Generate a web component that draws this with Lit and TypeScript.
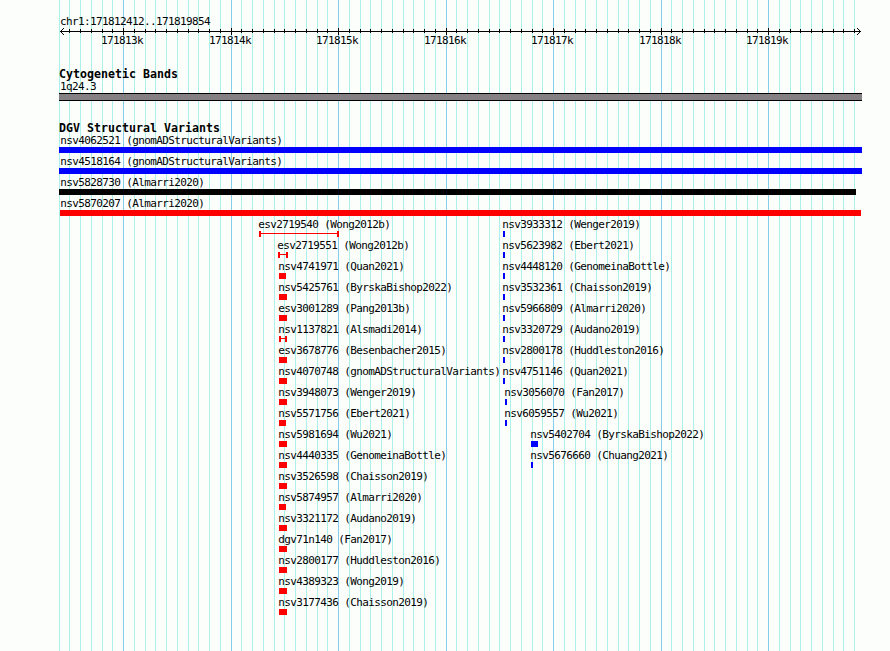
import { LitElement, css, html, svg } from 'lit';
import { customElement, property } from 'lit/decorators.js';
import { classMap } from 'lit/directives/class-map.js';
import { styleMap } from 'lit/directives/style-map.js';

interface Feature {
  name: string;
  // Offset of the label and of the glyph from the left edge of the lane
  indent: number;
  inset?: number;
  width: number;
  color: 'gain' | 'loss' | 'complex';
  span?: boolean;
}

const REGION_START = 171812412;
const REGION_END = 171819854;
const PANEL_LEFT = 60;
const PANEL_WIDTH = 800;

const toX = (bp: number) =>
  Math.round(PANEL_LEFT + ((bp - REGION_START) * PANEL_WIDTH) / (REGION_END - REGION_START + 1));

const TICKS: { bp: number; x: number; major: boolean }[] = [];
for (let bp = 171812400; bp <= REGION_END; bp += 100) {
  TICKS.push({ bp, x: toX(bp), major: bp % 1000 === 0 });
}

const WIDE: Feature[] = [
  { name: 'nsv4062521 (gnomADStructuralVariants)', indent: 1, inset: 0, width: 803, color: 'gain' },
  { name: 'nsv4518164 (gnomADStructuralVariants)', indent: 1, inset: 0, width: 803, color: 'gain' },
  { name: 'nsv5828730 (Almarri2020)', indent: 1, inset: 0, width: 797, color: 'complex' },
  { name: 'nsv5870207 (Almarri2020)', indent: 1, inset: 1, width: 801, color: 'loss' },
];

const loss = (name: string, width = 8, indent = 20, span = false): Feature => ({
  name, width, indent, span, color: 'loss',
});

const gain = (name: string, indent = 0, width = 2): Feature => ({
  name, indent, width, color: 'gain',
});

const LOSSES: Feature[] = [
  loss('esv2719540 (Wong2012b)', 80, 0, true),
  loss('esv2719551 (Wong2012b)', 10, 19, true),
  loss('nsv4741971 (Quan2021)', 7),
  loss('nsv5425761 (ByrskaBishop2022)'),
  loss('esv3001289 (Pang2013b)'),
  loss('nsv1137821 (Alsmadi2014)', 8, 20, true),
  loss('esv3678776 (Besenbacher2015)'),
  loss('nsv4070748 (gnomADStructuralVariants)'),
  loss('nsv3948073 (Wenger2019)'),
  loss('nsv5571756 (Ebert2021)', 7),
  loss('nsv5981694 (Wu2021)'),
  loss('nsv4440335 (GenomeinaBottle)'),
  loss('nsv3526598 (Chaisson2019)'),
  loss('nsv5874957 (Almarri2020)', 7),
  loss('nsv3321172 (Audano2019)'),
  loss('dgv71n140 (Fan2017)'),
  loss('nsv2800177 (Huddleston2016)'),
  loss('nsv4389323 (Wong2019)'),
  loss('nsv3177436 (Chaisson2019)'),
];

const GAINS: Feature[] = [
  gain('nsv3933312 (Wenger2019)'),
  gain('nsv5623982 (Ebert2021)'),
  gain('nsv4448120 (GenomeinaBottle)'),
  gain('nsv3532361 (Chaisson2019)'),
  gain('nsv5966809 (Almarri2020)'),
  gain('nsv3320729 (Audano2019)'),
  gain('nsv2800178 (Huddleston2016)'),
  gain('nsv4751146 (Quan2021)'),
  gain('nsv3056070 (Fan2017)', 2),
  gain('nsv6059557 (Wu2021)', 2),
  gain('nsv5402704 (ByrskaBishop2022)', 28, 7),
  gain('nsv5676660 (Chuang2021)', 28),
];

@customElement('variant-lane')
export class VariantLane extends LitElement {
  @property({ attribute: false }) features: Feature[] = [];

  static styles = css`
    :host {
      display: block;
    }

    .feature {
      height: 21px;
    }

    .label {
      height: 12px;
      line-height: 12px;
      white-space: pre;
      text-indent: 0.2px;
    }

    .glyph {
      height: 6px;
      box-sizing: border-box;
    }

    .gain {
      background: #0000ff;
    }

    .loss {
      background: #ff0000;
    }

    .complex {
      background: #000;
    }

    .span {
      border: solid #ff0000;
      border-width: 0 2px;
      background: linear-gradient(#ff0000, #ff0000) 0 2px / 100% 1px no-repeat;
    }
  `;

  render() {
    return this.features.map(
      (f) => html`
        <div class="feature">
          <div class="label" style=${styleMap({ marginLeft: `${f.indent}px` })}>${f.name}</div>
          <div
            class=${classMap({ glyph: true, [f.color]: !f.span, span: !!f.span })}
            style=${styleMap({ marginLeft: `${f.inset ?? f.indent + 1}px`, width: `${f.width}px` })}
          ></div>
        </div>
      `,
    );
  }
}

@customElement('app-root')
export class GenomeBrowser extends LitElement {
  static styles = css`
    :host {
      display: block;
      position: relative;
      width: 890px;
      height: 651px;
      overflow: hidden;
      background: #fcfefc;
      color: #000;
      font-family: 'DejaVu Sans Mono', 'Liberation Mono', monospace;
      font-size: 11px;
      letter-spacing: -0.622px;
    }

    .grid {
      position: absolute;
      inset: 0;
      shape-rendering: crispEdges;
    }

    .minor {
      fill: #acf0ec;
    }

    .major {
      fill: #84ceec;
    }

    .panel {
      position: relative;
      box-sizing: border-box;
      height: 651px;
      padding: 16px 0 0 59px;
    }

    .region {
      height: 12px;
      line-height: 12px;
      padding-left: 1px;
    }

    .ruler {
      display: block;
      width: 831px;
      height: 20px;
      margin-left: -59px;
      overflow: visible;
    }

    .ruler text {
      text-anchor: middle;
    }

    .title {
      height: 12px;
      line-height: 10px;
      font-size: 11.6px;
      font-weight: bold;
      letter-spacing: 0.016px;
    }

    .cytogenetic {
      margin-top: 21px;
    }

    .band-label {
      height: 12px;
      line-height: 12px;
      padding-left: 1px;
    }

    .band {
      box-sizing: border-box;
      width: 803px;
      height: 8px;
      border: solid #000;
      border-width: 1px 0;
      background: #848084;
    }

    .variants {
      margin-top: 22px;
    }

    .lanes {
      display: grid;
      grid-template-columns: 244px 1fr;
      padding-left: 199px;
    }
  `;

  private renderGrid() {
    return html`
      <svg class="grid" width="890" height="651">
        ${TICKS.map(
          (t) => svg`<rect class=${t.major ? 'major' : 'minor'} x=${t.x} y="0" width="1" height="651" />`,
        )}
      </svg>
    `;
  }

  private renderRuler() {
    return html`
      <svg class="ruler" viewBox="0 0 831 20">
        <g shape-rendering="crispEdges">
          <rect x="60" y="3" width="801" height="1" />
          ${TICKS.slice(1).map((t) =>
            t.major
              ? svg`<rect x=${t.x} y="0" width="1" height="7" />`
              : svg`<rect x=${t.x} y="1" width="1" height="4" />`,
          )}
          <path d="M61 2h1v1h-1zM62 1h1v1h-1zM63 0h1v1h-1zM61 4h1v1h-1zM62 5h1v1h-1zM63 6h1v1h-1z" />
          <path d="M859 2h1v1h-1zM858 1h1v1h-1zM857 0h1v1h-1zM859 4h1v1h-1zM858 5h1v1h-1zM857 6h1v1h-1z" />
        </g>
        ${TICKS.filter((t) => t.major).map((t) => svg`<text x=${t.x - 1} y="16">${t.bp / 1000}k</text>`)}
      </svg>
    `;
  }

  render() {
    return html`
      ${this.renderGrid()}
      <div class="panel">
        <div class="region">chr1:${REGION_START}..${REGION_END}</div>
        ${this.renderRuler()}
        <div class="cytogenetic">
          <div class="title">Cytogenetic Bands</div>
          <div class="band-label">1q24.3</div>
          <div class="band"></div>
        </div>
        <div class="variants">
          <div class="title">DGV Structural Variants</div>
          <variant-lane .features=${WIDE}></variant-lane>
          <div class="lanes">
            <variant-lane .features=${LOSSES}></variant-lane>
            <variant-lane .features=${GAINS}></variant-lane>
          </div>
        </div>
      </div>
    `;
  }
}

declare global {
  interface HTMLElementTagNameMap {
    'app-root': GenomeBrowser;
    'variant-lane': VariantLane;
  }
}
